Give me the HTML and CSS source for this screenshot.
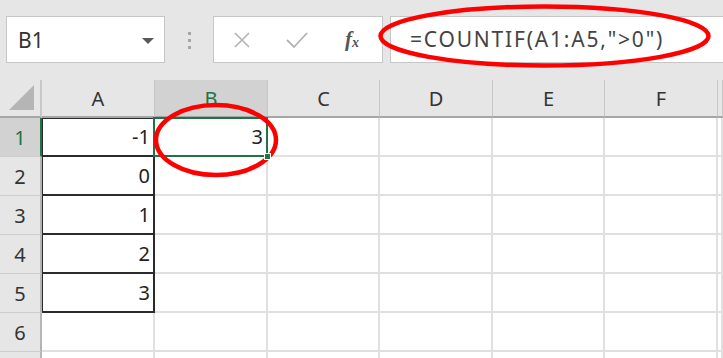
FILE: index.html
```html
<!DOCTYPE html>
<html lang="ja">
<head>
    <meta charset="UTF-8">
    <title>COUNTIF</title>
    <link rel="stylesheet" href="styles.css">
</head>
<body>
    <div class="formula-bar">
        <div class="name-box">
            <span>B1</span>
            <svg class="caret" width="12" height="6" viewBox="0 0 12 6"><path d="M0 0H12L6 6Z" fill="#595959"/></svg>
        </div>
        <div class="grip"><i></i><i></i><i></i></div>
        <div class="fx-buttons">
            <svg class="btn-icon" width="16" height="16" viewBox="0 0 16 16"><path d="M1 1L15 15M15 1L1 15" stroke="#b3b3b3" stroke-width="1.6" fill="none"/></svg>
            <svg class="btn-icon" width="22" height="16" viewBox="0 0 22 16"><path d="M1 8L8 15L21 1" stroke="#b3b3b3" stroke-width="1.8" fill="none"/></svg>
            <span class="fx"><i>f</i><sub>x</sub></span>
        </div>
        <div class="formula-input">=COUNTIF(A1:A5,"&gt;0")</div>
    </div>

    <div class="sheet">
        <div class="row head">
            <div class="corner"><svg width="26" height="26" viewBox="0 0 26 26"><path d="M0 25H25V0Z" fill="#b5b5b5"/></svg></div>
            <div class="col-head">A</div>
            <div class="col-head active">B</div>
            <div class="col-head">C</div>
            <div class="col-head">D</div>
            <div class="col-head">E</div>
            <div class="col-head">F</div>
            <div class="col-head"></div>
        </div>
        <div class="row">
            <div class="row-head active">1</div>
            <div class="cell boxed first">-1</div>
            <div class="cell selected">3<span class="fill-handle"></span></div>
            <div class="cell"></div><div class="cell"></div><div class="cell"></div><div class="cell"></div><div class="cell"></div>
        </div>
        <div class="row">
            <div class="row-head">2</div>
            <div class="cell boxed">0</div>
            <div class="cell"></div><div class="cell"></div><div class="cell"></div><div class="cell"></div><div class="cell"></div><div class="cell"></div>
        </div>
        <div class="row">
            <div class="row-head">3</div>
            <div class="cell boxed">1</div>
            <div class="cell"></div><div class="cell"></div><div class="cell"></div><div class="cell"></div><div class="cell"></div><div class="cell"></div>
        </div>
        <div class="row">
            <div class="row-head">4</div>
            <div class="cell boxed">2</div>
            <div class="cell"></div><div class="cell"></div><div class="cell"></div><div class="cell"></div><div class="cell"></div><div class="cell"></div>
        </div>
        <div class="row">
            <div class="row-head">5</div>
            <div class="cell boxed">3</div>
            <div class="cell"></div><div class="cell"></div><div class="cell"></div><div class="cell"></div><div class="cell"></div><div class="cell"></div>
        </div>
        <div class="row">
            <div class="row-head">6</div>
            <div class="cell"></div><div class="cell"></div><div class="cell"></div><div class="cell"></div><div class="cell"></div><div class="cell"></div><div class="cell"></div>
        </div>
        <div class="row last">
            <div class="row-head"></div>
            <div class="cell"></div><div class="cell"></div><div class="cell"></div><div class="cell"></div><div class="cell"></div><div class="cell"></div><div class="cell"></div>
        </div>
    </div>

    <!-- red marks drawn over the screenshot -->
    <svg class="marks" width="723" height="358" viewBox="0 0 723 358">
        <ellipse cx="544.5" cy="36" rx="164" ry="29.5" fill="none" stroke="#f00" stroke-width="4.5"/>
        <ellipse cx="216" cy="140" rx="60" ry="35" fill="none" stroke="#f00" stroke-width="4.5"/>
    </svg>
</body>
</html>
```

FILE: styles.css
```css
body {
    margin: 0;
    padding: 0;
    width: 723px;
    height: 358px;
    overflow: hidden;
    position: relative;
    background-color: #fff;
    font-family: "Noto Sans", "Noto Sans CJK JP", sans-serif;
    color: #222;
}

.formula-bar {
    display: flex;
    align-items: flex-start;
    height: 80px;
    padding: 16px 0 0 6px;
    box-sizing: border-box;
    background-color: #e6e6e6;
}
.name-box {
    display: flex;
    align-items: center;
    justify-content: space-between;
    width: 159px;
    height: 47px;
    padding: 0 10px 0 11px;
    box-sizing: border-box;
    background-color: #fff;
    border: 1px solid #c6c6c6;
    font-size: 21px;
    color: #333;
}
.name-box .caret {
    margin-top: 2px;
}
.grip {
    display: flex;
    flex-direction: column;
    gap: 4px;
    width: 48px;
    align-items: center;
    padding-top: 16px;
}
.grip i {
    display: block;
    width: 3px;
    height: 3px;
    background-color: #a6a6a6;
}
.fx-buttons {
    display: flex;
    align-items: center;
    width: 170px;
    height: 47px;
    padding-left: 20px;
    gap: 36px;
    box-sizing: border-box;
    background-color: #fff;
    border: 1px solid #c6c6c6;
}
.fx {
    font-family: "Liberation Serif", serif;
    font-size: 21px;
    color: #555;
    margin-left: 1px;
}
.fx i {
    font-weight: bold;
}
.fx sub {
    font-style: italic;
    font-weight: bold;
    font-size: 14px;
    vertical-align: -1px;
}
.formula-input {
    flex: 1;
    height: 47px;
    margin-left: 7px;
    padding-left: 19px;
    box-sizing: border-box;
    background-color: #fff;
    border: 1px solid #c6c6c6;
    border-right: none;
    font-size: 21px;
    letter-spacing: 1.8px;
    line-height: 44px;
    color: #444;
}

.sheet {
    background-color: #fff;
}
.row {
    display: grid;
    grid-template-columns: 42px 113px 113px 112px 113px 112px 113px 1fr;
    height: 39px;
}
.row.head {
    height: 38px;
}
.row.last {
    height: 6px;
}
.corner {
    display: flex;
    align-items: flex-end;
    justify-content: flex-end;
    padding: 0 5px 5px 0;
    background-color: #e6e6e6;
    border-right: 2px solid #c8c8c8;
    border-bottom: 2px solid #a6a6a6;
}
.col-head {
    display: flex;
    align-items: center;
    justify-content: center;
    background-color: #e6e6e6;
    border-right: 1px solid #c6c6c6;
    border-bottom: 2px solid #a6a6a6;
    font-size: 20px;
    color: #333;
}
.col-head.active {
    background-color: #d2d2d2;
    color: #217346;
}
.row-head {
    display: flex;
    align-items: center;
    justify-content: center;
    background-color: #e6e6e6;
    border-right: 2px solid #b5b5b5;
    border-bottom: 1px solid #cdcdcd;
    font-size: 20px;
    color: #333;
}
.row-head.active {
    background-color: #d2d2d2;
    border-right-color: #217346;
    color: #217346;
}
.cell {
    display: flex;
    align-items: center;
    justify-content: flex-end;
    padding-right: 3px;
    border-right: 2px solid #e0e0e0;
    border-bottom: 2px solid #e0e0e0;
    font-size: 20px;
    color: #222;
}
.row.last .cell,
.row.last .row-head {
    border-bottom: none;
}
.cell.boxed {
    border-right-color: #2b2b2b;
    border-bottom-color: #2b2b2b;
    box-shadow: inset 1px 0 0 #2b2b2b;
}
.cell.boxed.first {
    box-shadow: inset 1px 1px 0 #2b2b2b;
}
.cell.selected {
    position: relative;
}
.cell.selected::after {
    content: '';
    position: absolute;
    left: -2px;
    top: -1px;
    right: -2px;
    bottom: -2px;
    border: 2px solid #217346;
}
.fill-handle {
    position: absolute;
    right: -5px;
    bottom: -5px;
    width: 5px;
    height: 5px;
    background-color: #217346;
    border: 1px solid #fff;
    z-index: 1;
}

.marks {
    position: absolute;
    left: 0;
    top: 0;
    pointer-events: none;
}
```
